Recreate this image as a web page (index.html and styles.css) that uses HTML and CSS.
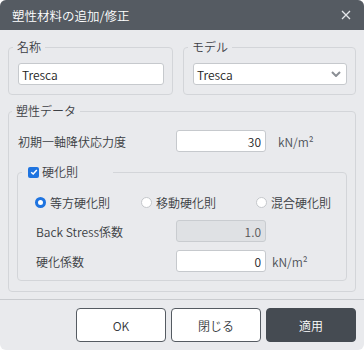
FILE: index.html
```html
<!DOCTYPE html>
<html lang="ja">
<head>
  <meta charset="UTF-8">
  <meta name="viewport" content="width=device-width, initial-scale=1.0">
  <title>塑性材料の追加/修正</title>
  <link rel="stylesheet" href="styles.css">
</head>
<body>

  <div class="dialog">
    <div class="titlebar">
      <span>塑性材料の追加/修正</span>
      <svg class="close" width="10" height="10" viewBox="0 0 10 10">
        <path d="M1 1L9 9M9 1L1 9" stroke="#e4e6ea" stroke-width="1.3" fill="none"/>
      </svg>
    </div>

    <div class="body">
      <div class="top-row">
        <fieldset class="group">
          <legend>名称</legend>
          <input class="field" type="text" value="Tresca">
        </fieldset>
        <fieldset class="group">
          <legend>モデル</legend>
          <div class="field select">
            <span>Tresca</span>
            <svg width="10" height="6" viewBox="0 0 10 6">
              <path d="M1 1L5 5L9 1" stroke="#8a8e94" stroke-width="2" fill="none"/>
            </svg>
          </div>
        </fieldset>
      </div>

      <fieldset class="group plastic">
        <legend>塑性データ</legend>
        <div class="row outer-row">
          <label>初期一軸降伏応力度</label>
          <input class="field num" type="text" value="30">
          <span class="unit">kN/m²</span>
        </div>

        <fieldset class="group hardening">
          <legend>
            <span class="check">
              <svg width="8" height="8" viewBox="0 0 8 8">
                <path d="M1.2 4.2L3.2 6L6.8 2" stroke="#fff" stroke-width="1.5" fill="none"/>
              </svg>
            </span>
            硬化則
          </legend>
          <div class="radios">
            <span class="radio"><span class="dot on"></span>等方硬化則</span>
            <span class="radio"><span class="dot"></span>移動硬化則</span>
            <span class="radio"><span class="dot"></span>混合硬化則</span>
          </div>
          <div class="row inner-row">
            <label>Back Stress係数</label>
            <input class="field num" type="text" value="1.0" disabled>
          </div>
          <div class="row inner-row">
            <label>硬化係数</label>
            <input class="field num" type="text" value="0">
            <span class="unit near">kN/m²</span>
          </div>
        </fieldset>
      </fieldset>
    </div>

    <div class="footer">
      <button class="btn">OK</button>
      <button class="btn">閉じる</button>
      <button class="btn primary">適用</button>
    </div>
  </div>

</body>
</html>
```

FILE: styles.css
```css
body {
  margin: 0;
  background-color: #fff;
  font-family: "Noto Sans CJK JP", "Noto Sans", sans-serif;
  font-size: 12px;
  font-weight: 350;
  color: #3a3d42;
}
.dialog {
  width: 364px;
  height: 350px;
  border-radius: 6px;
  overflow: hidden;
  background-color: #e9eaed;
  display: flex;
  flex-direction: column;
}
.titlebar {
  height: 30px;
  flex: none;
  background-color: #555b62;
  color: #fff;
  font-size: 12.5px;
  display: flex;
  align-items: center;
  justify-content: space-between;
  padding: 0 12px 0 12px;
}
.close {
  margin-right: 1px;
}
.body {
  flex: 1;
  padding: 10px 8px 0;
}
.top-row {
  display: grid;
  grid-template-columns: 165px 1fr;
  gap: 10px;
}
.group {
  margin: 0;
  border: 1px solid #d3d5d9;
  border-radius: 4px;
  padding: 9px 8px 9px 9px;
  min-width: 0;
}
.group legend {
  margin-left: -5px;
  padding: 0 4px;
  line-height: 14px;
  color: #3d4045;
}
.field {
  display: block;
  box-sizing: border-box;
  width: 100%;
  height: 22px;
  margin: 0;
  border: 1px solid #c6c9cd;
  border-radius: 3px;
  background-color: #fff;
  font: inherit;
  color: #222;
  padding: 0 4px 0 3px;
  outline: none;
}
.select {
  display: flex;
  align-items: center;
  justify-content: space-between;
  padding: 0 5px 0 3px;
}
.plastic {
  margin-top: 9px;
  padding: 12px 8px 10px 8px;
}
.row {
  display: grid;
  align-items: center;
}
.outer-row {
  grid-template-columns: 158px 90px auto;
  padding-left: 1px;
}
.inner-row {
  grid-template-columns: 140px 90px auto;
}
.num {
  text-align: right;
}
.field:disabled {
  background-color: #dfe1e4;
  border-color: #c9ccd0;
  color: #555;
}
.unit {
  margin-left: 12px;
  color: #4c5057;
}
.unit.near {
  margin-left: 6px;
}
.hardening {
  margin-top: 13px;
  padding: 15px 7px 8px 18px;
}
.hardening legend {
  margin-left: -14px;
  padding: 0 35px 0 6px;
  display: flex;
  align-items: center;
}
.check {
  width: 11px;
  height: 11px;
  border-radius: 2px;
  background-color: #1f74e0;
  display: inline-flex;
  align-items: center;
  justify-content: center;
  margin-right: 3px;
}
.radios {
  display: grid;
  grid-template-columns: 106px 115px auto;
  margin-left: -1px;
  height: 16px;
  align-items: center;
}
.radio {
  display: flex;
  align-items: center;
}
.dot {
  width: 11px;
  height: 11px;
  box-sizing: border-box;
  border-radius: 50%;
  border: 1px solid #c4c7cb;
  background-color: #fff;
  margin-right: 4px;
}
.dot.on {
  border: 3px solid #1f74e0;
}
.inner-row {
  margin-top: 10px;
}
.inner-row + .inner-row {
  margin-top: 8px;
}
.footer {
  flex: none;
  border-top: 1px solid #c9cbcf;
  padding: 8px 8px 8px 0;
  display: flex;
  justify-content: flex-end;
  gap: 5px;
}
.btn {
  width: 90px;
  height: 34px;
  border: 1px solid #555b62;
  border-radius: 4px;
  background-color: #fff;
  font: inherit;
  color: #33363b;
}
.btn.primary {
  background-color: #454b52;
  border-color: #454b52;
  color: #fff;
}
```
